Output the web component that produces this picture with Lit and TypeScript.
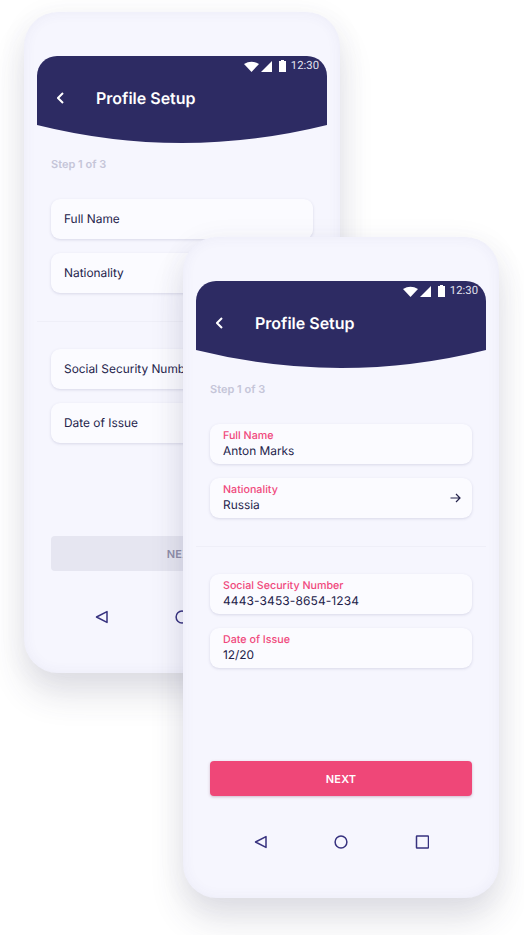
import { LitElement, html, css, nothing } from 'lit';
import { customElement, property } from 'lit/decorators.js';

interface Field {
  label: string;
  value: string;
  arrow?: boolean;
}

const firstGroup: Field[] = [
  { label: 'Full Name', value: 'Anton Marks' },
  { label: 'Nationality', value: 'Russia', arrow: true },
];

const secondGroup: Field[] = [
  { label: 'Social Security Number', value: '4443-3453-8654-1234' },
  { label: 'Date of Issue', value: '12/20' },
];

@customElement('phone-screen')
export class PhoneScreen extends LitElement {
  static styles = css`
    :host {
      display: block;
      font-family: Inter, 'Liberation Sans', sans-serif;
      text-rendering: geometricPrecision;
    }
    .phone {
      width: 316px;
      height: 661px;
      box-sizing: border-box;
      padding: 44px 13px 0;
      border-radius: 34px;
      background: #f6f6fe;
      box-shadow: inset 0 0 14px rgba(70, 70, 140, 0.06),
        0 22px 34px rgba(60, 60, 90, 0.14), 0 4px 30px rgba(60, 60, 110, 0.06);
    }
    .header {
      height: 87px;
      box-sizing: border-box;
      padding: 3px 8px 0 20px;
      background: #2d2b63;
      color: #fff;
      clip-path: path('M0 20 A20 20 0 0 1 20 0 H270 A20 20 0 0 1 290 20 V69 Q145 105 0 69 Z');
    }
    .status {
      display: flex;
      justify-content: flex-end;
      align-items: center;
      height: 14px;
    }
    .status svg {
      display: block;
      fill: #fff;
    }
    .wifi {
      margin-right: 2px;
    }
    .signal {
      margin-right: 7px;
    }
    .battery {
      margin-right: 5px;
    }
    .time {
      font-family: Roboto, sans-serif;
      font-size: 11.3px;
      line-height: 14px;
      color: #e4e4f0;
    }
    .bar {
      display: flex;
      align-items: center;
      height: 24px;
      margin-top: 13px;
    }
    .bar svg {
      display: block;
      margin-right: 32px;
    }
    .title {
      font-size: 16px;
      font-weight: 600;
      line-height: 24px;
    }
    .content {
      padding: 0 14px;
    }
    .step {
      margin-top: 13px;
      font-size: 11px;
      font-weight: 600;
      line-height: 16px;
      color: #c5c5d8;
    }
    .fields {
      display: flex;
      flex-direction: column;
      gap: 14px;
      margin-top: 27px;
    }
    .field {
      display: flex;
      align-items: center;
      justify-content: space-between;
      height: 40px;
      box-sizing: border-box;
      padding: 0 11px 1px 13px;
      border-radius: 9px;
      background: #fbfbff;
      box-shadow: 0 1px 3px rgba(60, 60, 120, 0.16);
    }
    .label {
      margin-bottom: 1px;
      font-size: 10.7px;
      font-weight: 500;
      line-height: 13px;
      color: #f0487c;
    }
    .value {
      font-size: 11.9px;
      line-height: 16px;
      color: #23224a;
    }
    .value.wide {
      font-size: 12px;
      letter-spacing: 0.1px;
    }
    .empty {
      font-size: 11.9px;
      line-height: 16px;
      color: #23224a;
    }
    .divider {
      height: 1px;
      margin: 28px 0 0;
      background: #efeff8;
    }
    .second {
      margin-top: 27px;
    }
    .next {
      display: flex;
      align-items: center;
      justify-content: center;
      height: 35px;
      margin-top: 93px;
      border-radius: 4px;
      font-size: 11px;
      font-weight: 600;
      letter-spacing: 0.2px;
    }
    .next.on {
      background: #ef4778;
      color: #fff;
      box-shadow: 0 1px 3px rgba(120, 40, 80, 0.3);
    }
    .next.off {
      background: #e6e6f1;
      color: #8f8eaa;
    }
    .nav {
      display: flex;
      justify-content: space-between;
      margin: 39px auto 0;
      width: 176px;
    }
    .nav svg {
      display: block;
      fill: none;
      stroke: #37327f;
      stroke-width: 1.5;
    }
  `;

  @property({ type: Boolean }) filled = false;

  private renderField(f: Field) {
    // only the long digit string sits wider than plain 12px Inter
    const wide = /^\d{4}-/.test(f.value);
    return html`
      <div class="field">
        ${this.filled
          ? html`<div>
              <div class="label">${f.label}</div>
              <div class="value ${wide ? 'wide' : ''}">${f.value}</div>
            </div>`
          : html`<div class="empty">${f.label}</div>`}
        ${f.arrow && this.filled
          ? html`<svg width="11" height="10" viewBox="0 0 11 10" fill="none" stroke="#25244d" stroke-width="1.2">
              <path d="M0.5 5H10M6 1l4 4-4 4" />
            </svg>`
          : nothing}
      </div>
    `;
  }

  render() {
    return html`
      <div class="phone">
        <div class="header">
          <div class="status">
            <svg class="wifi" width="15" height="11" viewBox="0 0 15 11">
              <path d="M0 3Q7.5-1.6 15 3L7.5 11Z" />
            </svg>
            <svg class="signal" width="11" height="11" viewBox="0 0 11 11">
              <path d="M0 11L11 0V11Z" />
            </svg>
            <svg class="battery" width="7" height="12" viewBox="0 0 7 12">
              <path d="M2 0H5V1H7V12H0V1H2Z" />
            </svg>
            <span class="time">12:30</span>
          </div>
          <div class="bar">
            <svg width="7" height="12" viewBox="0 0 7 12" fill="none" stroke="#fff" stroke-width="2">
              <path d="M6 1L1 6l5 5" />
            </svg>
            <span class="title">Profile Setup</span>
          </div>
        </div>
        <div class="content">
          <div class="step">Step 1 of 3</div>
          <div class="fields">${firstGroup.map((f) => this.renderField(f))}</div>
        </div>
        <div class="divider"></div>
        <div class="content">
          <div class="fields second">${secondGroup.map((f) => this.renderField(f))}</div>
          <div class="next ${this.filled ? 'on' : 'off'}">NEXT</div>
          <div class="nav">
            <svg width="14" height="14" viewBox="0 0 14 14">
              <path d="M13 1.6V12.4L2.5 7Z" stroke-linejoin="round" />
            </svg>
            <svg width="14" height="14" viewBox="0 0 14 14">
              <circle cx="7" cy="7" r="5.9" />
            </svg>
            <svg width="14" height="14" viewBox="0 0 14 14">
              <rect x="1.5" y="1" width="12" height="12" rx="0.5" />
            </svg>
          </div>
        </div>
      </div>
    `;
  }
}

@customElement('app-root')
export class AppRoot extends LitElement {
  static styles = css`
    :host {
      display: block;
      position: relative;
      width: 524px;
      height: 935px;
      overflow: hidden;
      background: #fff;
    }
    .back,
    .front {
      position: absolute;
    }
    .back {
      left: 24px;
      top: 12px;
    }
    .front {
      left: 183px;
      top: 237px;
    }
  `;

  render() {
    return html`
      <phone-screen class="back"></phone-screen>
      <phone-screen class="front" filled></phone-screen>
    `;
  }
}
